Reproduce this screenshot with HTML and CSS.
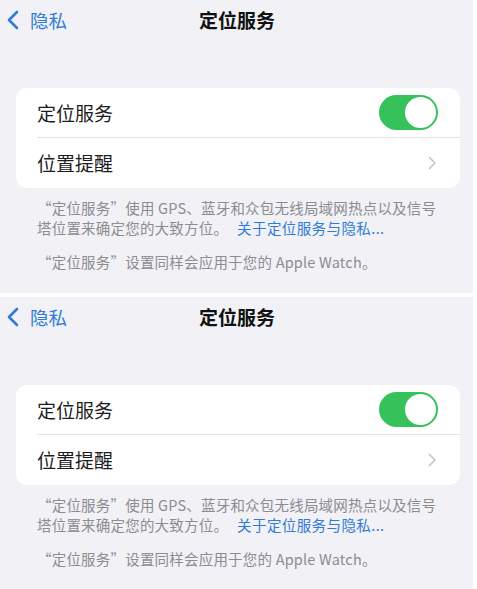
FILE: index.html
```html
<!DOCTYPE html>
<html lang="zh-CN">
<head>
<meta charset="utf-8">
<title>定位服务</title>
<link rel="stylesheet" href="styles.css">
</head>
<body>
<div class="page">
  <section class="screen">
    <header class="nav">
      <a class="back" href="#">
        <svg class="back-icon" width="14" height="20" viewBox="0 0 14 20"><polyline points="11,2 3,10 11,18" fill="none" stroke="#2f7bd6" stroke-width="2.6" stroke-linecap="round" stroke-linejoin="round"/></svg>
        <span class="back-label">隐私</span>
      </a>
      <h1 class="title">定位服务</h1>
    </header>
    <div class="card">
      <div class="row">
        <span class="row-label">定位服务</span>
        <span class="toggle"><span class="knob"></span></span>
      </div>
      <div class="row row-last">
        <span class="row-label">位置提醒</span>
        <svg class="chev" width="9" height="14" viewBox="0 0 9 14"><polyline points="1.5,1.5 7,7 1.5,12.5" fill="none" stroke="#c4c4c8" stroke-width="1.6" stroke-linecap="round" stroke-linejoin="round"/></svg>
      </div>
    </div>
    <p class="foot"><span class="line">“定位服务”使用 GPS、蓝牙和众包无线局域网热点以及信号</span><span class="line">塔位置来确定您的大致方位。<a class="link" href="#">关于定位服务与隐私...</a></span></p>
    <p class="foot foot-2">“定位服务”设置同样会应用于您的 Apple Watch。</p>
  </section>
  <section class="screen">
    <header class="nav">
      <a class="back" href="#">
        <svg class="back-icon" width="14" height="20" viewBox="0 0 14 20"><polyline points="11,2 3,10 11,18" fill="none" stroke="#2f7bd6" stroke-width="2.6" stroke-linecap="round" stroke-linejoin="round"/></svg>
        <span class="back-label">隐私</span>
      </a>
      <h1 class="title">定位服务</h1>
    </header>
    <div class="card">
      <div class="row">
        <span class="row-label">定位服务</span>
        <span class="toggle"><span class="knob"></span></span>
      </div>
      <div class="row row-last">
        <span class="row-label">位置提醒</span>
        <svg class="chev" width="9" height="14" viewBox="0 0 9 14"><polyline points="1.5,1.5 7,7 1.5,12.5" fill="none" stroke="#c4c4c8" stroke-width="1.6" stroke-linecap="round" stroke-linejoin="round"/></svg>
      </div>
    </div>
    <p class="foot"><span class="line">“定位服务”使用 GPS、蓝牙和众包无线局域网热点以及信号</span><span class="line">塔位置来确定您的大致方位。<a class="link" href="#">关于定位服务与隐私...</a></span></p>
    <p class="foot foot-2">“定位服务”设置同样会应用于您的 Apple Watch。</p>
  </section>
</div>
</body>
</html>
```
FILE: styles.css
```css
* { box-sizing: border-box; }
html, body { margin: 0; padding: 0; background: #ffffff; }
body {
  font-family: "Noto Sans CJK SC", "Noto Sans", sans-serif;
  color: #1c1c1e;
}
.page {
  width: 473px;
  display: flex;
  flex-direction: column;
  gap: 4px;
}
.screen {
  background: #f1f1f6;
  height: 293px;
  overflow: hidden;
}
.nav {
  position: relative;
  height: 40px;
  display: flex;
  align-items: center;
  justify-content: center;
}
.back {
  position: absolute;
  left: 6px;
  top: 10px;
  display: flex;
  align-items: center;
  gap: 10px;
  color: #2f7bd6;
  text-decoration: none;
  font-size: 18.5px;
  line-height: 20px;
}
.back-icon { display: block; }
.title {
  margin: 0;
  font-size: 19px;
  font-weight: 700;
  line-height: 24px;
  color: #111;
  margin-left: 1px;
}
.card {
  margin: 48px 0 0 16px;
  width: 444px;
  background: #ffffff;
  border-radius: 11px;
  padding-left: 21px;
}
.row {
  height: 50px;
  display: flex;
  align-items: center;
  justify-content: space-between;
  padding-right: 22px;
  border-bottom: 1px solid #e3e3e6;
}
.row-last { border-bottom: none; padding-right: 23px; }
.row-label {
  font-size: 19px;
  line-height: 24px;
  color: #1c1c1e;
}
.toggle {
  width: 59px;
  height: 35px;
  border-radius: 18px;
  background: #35c25a;
  display: flex;
  justify-content: flex-end;
  align-items: center;
  padding: 2px;
}
.knob {
  width: 31px;
  height: 31px;
  border-radius: 50%;
  background: #ffffff;
}
.chev { display: block; }
.foot {
  width: 420px;
  margin: 10px 0 0 37px;
  font-size: 14.5px;
  line-height: 20px;
  letter-spacing: 0.2px;
  color: #8c8c91;
}
.line { display: block; white-space: nowrap; }
.foot-2 { margin-top: 14px; }
.link {
  display: inline-block;
  margin-left: 9px;
  letter-spacing: 0.4px;
  color: #2f7bd6;
  text-decoration: none;
}
```
